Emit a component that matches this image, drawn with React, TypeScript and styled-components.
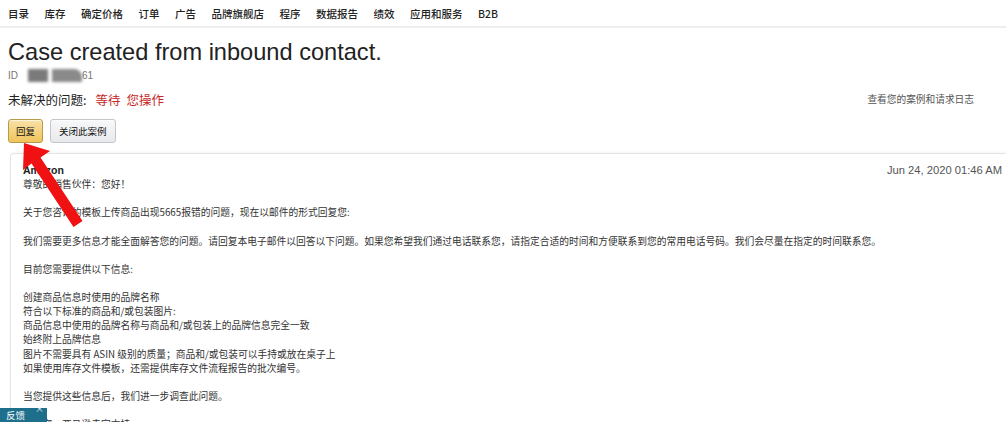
import styled, { createGlobalStyle } from "styled-components";

const GlobalStyle = createGlobalStyle`
  html, body {
    margin: 0;
    padding: 0;
    background: #fff;
    overflow: hidden;
  }
  body {
    font-family: "Liberation Sans", Arial, "Noto Sans CJK SC", sans-serif;
    color: #333;
  }
`;

const navItems = [
  "目录",
  "库存",
  "确定价格",
  "订单",
  "广告",
  "品牌旗舰店",
  "程序",
  "数据报告",
  "绩效",
  "应用和服务",
  "B2B",
];

const bodyLines = [
  "尊敬的销售伙伴：您好！",
  "",
  "关于您咨询的模板上传商品出现5665报错的问题，现在以邮件的形式回复您:",
  "",
  "我们需要更多信息才能全面解答您的问题。请回复本电子邮件以回答以下问题。如果您希望我们通过电话联系您，请指定合适的时间和方便联系到您的常用电话号码。我们会尽量在指定的时间联系您。",
  "",
  "目前您需要提供以下信息:",
  "",
  "创建商品信息时使用的品牌名称",
  "符合以下标准的商品和/或包装图片:",
  "商品信息中使用的品牌名称与商品和/或包装上的品牌信息完全一致",
  "始终附上品牌信息",
  "图片不需要具有 ASIN 级别的质量；商品和/或包装可以手持或放在桌子上",
  "如果使用库存文件模板，还需提供库存文件流程报告的批次编号。",
  "",
  "当您提供这些信息后，我们进一步调查此问题。",
  "",
  "谢谢您，亚马逊卖家支持",
];

export default function App() {
  return (
    <Page>
      <GlobalStyle />
      <NavBar>
        {navItems.map((item) => (
          <NavItem key={item}>{item}</NavItem>
        ))}
      </NavBar>
      <Main>
        <Title>Case created from inbound contact.</Title>
        <IdLine>
          ID
          <Redact $w={20} />
          <Redact $w={30} $round />
          61
        </IdLine>
        <StatusRow>
          <Status>
            未解决的问题:
            <StatusValue>等待</StatusValue>
            <StatusValue>您操作</StatusValue>
          </Status>
          <LogLink>查看您的案例和请求日志</LogLink>
        </StatusRow>
        <ButtonRow>
          <Button $primary>回复</Button>
          <Button>关闭此案例</Button>
        </ButtonRow>
        <Card>
          <CardHeader>
            <Sender>Amazon</Sender>
            <DateText>Jun 24, 2020 01:46 AM</DateText>
          </CardHeader>
          <Body>
            {bodyLines.map((line, i) => (
              <Line key={i}>{line || "\u00a0"}</Line>
            ))}
          </Body>
        </Card>
      </Main>
      <Arrow width="100" height="110" viewBox="0 0 100 110">
        <polygon
          points="24,13 50,21 40.5,27.5 82.5,91 73.5,97 31.5,33.5 23,40"
          fill="#f01212"
        />
      </Arrow>
      <Feedback>
        反馈
        <Close>×</Close>
      </Feedback>
    </Page>
  );
}

const Page = styled.div`
  position: relative;
  width: 1006px;
  height: 422px;
  overflow: hidden;
`;

const NavBar = styled.nav`
  display: flex;
  align-items: center;
  gap: 15.5px;
  height: 28px;
  padding: 0 8px;
  border-bottom: 2px solid #eeeeee;
  box-sizing: border-box;
`;

const NavItem = styled.span`
  font-family: "Noto Sans CJK SC", "Liberation Sans", sans-serif;
  font-size: 10.5px;
  font-weight: 500;
  color: #222;
`;

const Main = styled.main`
  padding: 0 0 0 8px;
`;

const Title = styled.h1`
  margin: 9px 0 0;
  font-size: 23.6px;
  line-height: 30px;
  font-weight: 400;
  color: #222;
`;

const IdLine = styled.div`
  display: flex;
  align-items: center;
  height: 14px;
  margin-top: 1px;
  font-size: 10px;
  color: #777;
`;

const Redact = styled.span<{ $w: number; $round?: boolean }>`
  display: inline-block;
  width: ${(p) => p.$w}px;
  height: 13px;
  margin-left: ${(p) => (p.$round ? 4 : 10)}px;
  background: ${(p) => (p.$round ? "#8a8a8a" : "#7a7a7a")};
  border-top-right-radius: ${(p) => (p.$round ? "8px" : "0")};
  filter: blur(1.5px);
`;

const StatusRow = styled.div`
  display: flex;
  justify-content: space-between;
  align-items: center;
  margin-top: 8px;
  height: 18px;
  padding-right: 32px;
`;

const Status = styled.div`
  font-family: "Noto Sans CJK SC", sans-serif;
  font-size: 12.5px;
  color: #222;
`;

const StatusValue = styled.span`
  margin-left: 9px;
  color: #c62828;
  & + & {
    margin-left: 6px;
  }
`;

const LogLink = styled.span`
  font-family: "Noto Sans CJK SC", sans-serif;
  font-size: 9.7px;
  color: #555;
`;

const ButtonRow = styled.div`
  display: flex;
  gap: 7px;
  margin-top: 11px;
`;

const Button = styled.button<{ $primary?: boolean }>`
  height: 24px;
  padding: 0 ${(p) => (p.$primary ? 7 : 8)}px;
  font-family: "Noto Sans CJK SC", sans-serif;
  font-size: 9.5px;
  color: #111;
  border-radius: 3px;
  border: 1px solid ${(p) => (p.$primary ? "#b99a4a" : "#c3c5c9")};
  background: ${(p) =>
    p.$primary
      ? "linear-gradient(#f8e2a8, #f0c45a)"
      : "linear-gradient(#f7f8fa, #e7e9ec)"};
  box-shadow: 0 1px 0 rgba(255, 255, 255, 0.6) inset;
`;

const Card = styled.section`
  margin: 10px 0 0 2px;
  padding: 9px 4px 0 12px;
  border: 1px solid #e4e4e4;
  border-right: none;
  border-radius: 4px 0 0 0;
  box-shadow: 0 -1px 3px rgba(0, 0, 0, 0.04);
`;

const CardHeader = styled.div`
  display: flex;
  justify-content: space-between;
  align-items: center;
  height: 14px;
`;

const Sender = styled.span`
  font-size: 10.5px;
  font-weight: 700;
  color: #222;
`;

const DateText = styled.span`
  font-size: 11.2px;
  color: #555;
`;

const Body = styled.div`
  font-family: "Noto Sans CJK SC", sans-serif;
  font-size: 9.75px;
  line-height: 14.12px;
  color: #333;
`;

const Line = styled.div`
  white-space: nowrap;
`;

const Arrow = styled.svg`
  position: absolute;
  left: 0;
  top: 130px;
`;

const Feedback = styled.div`
  position: absolute;
  left: 0;
  bottom: 0;
  width: 47px;
  height: 14px;
  padding-left: 6px;
  box-sizing: border-box;
  background: #1e6f8c;
  color: #fff;
  font-family: "Noto Sans CJK SC", sans-serif;
  font-size: 9.5px;
  line-height: 14px;
`;

const Close = styled.span`
  position: absolute;
  right: 3px;
  top: -4px;
  font-size: 9px;
  line-height: 10px;
`;
